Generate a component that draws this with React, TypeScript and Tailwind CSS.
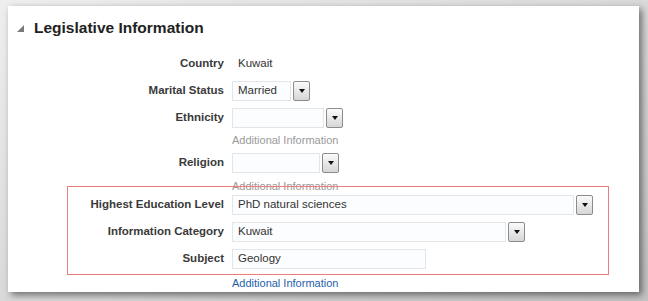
import React from 'react'

const font = { fontFamily: '"Liberation Sans", Arial, sans-serif' }

function DropButton() {
  return (
    <span className="ml-[2px] flex h-[20px] w-[17px] items-center justify-center rounded-[2px] border border-[#8c8c8c] bg-gradient-to-b from-[#fbfbfb] to-[#d6d6d6]">
      <span className="h-0 w-0 border-x-[3.5px] border-t-[4px] border-x-transparent border-t-[#111]" />
    </span>
  )
}

function Box({ width, value }: { width: number; value?: string }) {
  return (
    <span
      className="flex h-[20px] items-center border border-[#e2e6ea] bg-[#fcfdfe] pl-[5px] text-[11.5px] text-[#333]"
      style={{ width }}
    >
      {value}
    </span>
  )
}

function Row({
  label,
  labelWidth = 216,
  children,
  className = '',
}: {
  label: string
  labelWidth?: number
  children: React.ReactNode
  className?: string
}) {
  return (
    <div className={`flex h-[20px] items-center ${className}`}>
      <span
        className="shrink-0 text-right text-[11.5px] font-bold text-[#3a3a3a]"
        style={{ width: labelWidth }}
      >
        {label}
      </span>
      <div className="ml-[8px] flex items-center">{children}</div>
    </div>
  )
}

function Extra({ blue = false, className = '' }: { blue?: boolean; className?: string }) {
  return (
    <div
      className={`ml-[224px] h-[14px] text-[11px] leading-[14px] ${
        blue ? 'text-[#1f5fa8]' : 'text-[#9a9a9a]'
      } ${className}`}
    >
      Additional Information
    </div>
  )
}

export default function App() {
  return (
    <div
      className="h-[301px] w-[648px] overflow-hidden bg-gradient-to-br from-[#efefef] to-[#c4c4c4] pl-[8px] pt-[6px]"
      style={font}
    >
      <div className="flex h-[286px] w-[631px] flex-col bg-white shadow-[3px_3px_7px_rgba(0,0,0,0.5)]">
        <div className="mt-[14px] flex h-[16px] items-center">
          <span className="ml-[9px] h-0 w-0 border-b-[7px] border-l-[7px] border-l-transparent border-b-[#7a7a7a]" />
          <span className="ml-[10px] text-[15.5px] font-bold leading-none text-[#222]">
            Legislative Information
          </span>
        </div>

        <Row label="Country" className="mt-[18px]">
          <span className="pl-[6px] text-[11.5px] text-[#333]">Kuwait</span>
        </Row>

        <Row label="Marital Status" className="mt-[7px]">
          <Box width={59} value="Married" />
          <DropButton />
        </Row>

        <Row label="Ethnicity" className="mt-[7px]">
          <Box width={92} />
          <DropButton />
        </Row>
        <Extra className="mt-[5px]" />

        <Row label="Religion" className="mt-[6px]">
          <Box width={88} />
          <DropButton />
        </Row>
        <Extra className="mt-[6px]" />

        <div className="ml-[59px] -mt-[7px] h-[89px] w-[542px] border border-[#f07c7c] pt-[8px]">
          <Row label="Highest Education Level" labelWidth={156}>
            <Box width={342} value="PhD natural sciences" />
            <DropButton />
          </Row>
          <Row label="Information Category" labelWidth={156} className="mt-[7px]">
            <Box width={274} value="Kuwait" />
            <DropButton />
          </Row>
          <Row label="Subject" labelWidth={156} className="mt-[7px]">
            <Box width={194} value="Geology" />
          </Row>
        </div>
        <Extra blue className="mt-[1px]" />
      </div>
    </div>
  )
}
